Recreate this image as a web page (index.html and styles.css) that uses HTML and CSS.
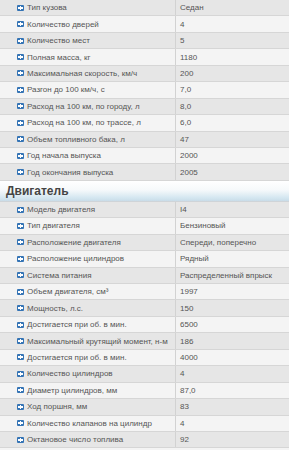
FILE: index.html
```html
<!DOCTYPE html>
<html lang="ru">
<head>
<meta charset="utf-8">
<title>Характеристики</title>
<link rel="stylesheet" href="styles.css">
</head>
<body>
<div class="specs">
  <div class="group">
    <div class="row"><div class="name"><span class="ico"></span>Тип кузова</div><div class="val">Седан</div></div>
    <div class="row"><div class="name"><span class="ico"></span>Количество дверей</div><div class="val">4</div></div>
    <div class="row"><div class="name"><span class="ico"></span>Количество мест</div><div class="val">5</div></div>
    <div class="row"><div class="name"><span class="ico"></span>Полная масса, кг</div><div class="val">1180</div></div>
    <div class="row"><div class="name"><span class="ico"></span>Максимальная скорость, км/ч</div><div class="val">200</div></div>
    <div class="row"><div class="name"><span class="ico"></span>Разгон до 100 км/ч, с</div><div class="val">7,0</div></div>
    <div class="row"><div class="name"><span class="ico"></span>Расход на 100 км, по городу, л</div><div class="val">8,0</div></div>
    <div class="row"><div class="name"><span class="ico"></span>Расход на 100 км, по трассе, л</div><div class="val">6,0</div></div>
    <div class="row"><div class="name"><span class="ico"></span>Объем топливного бака, л</div><div class="val">47</div></div>
    <div class="row"><div class="name"><span class="ico"></span>Год начала выпуска</div><div class="val">2000</div></div>
    <div class="row"><div class="name"><span class="ico"></span>Год окончания выпуска</div><div class="val">2005</div></div>
  </div>
  <div class="section-title">Двигатель</div>
  <div class="group">
    <div class="row"><div class="name"><span class="ico"></span>Модель двигателя</div><div class="val">I4</div></div>
    <div class="row"><div class="name"><span class="ico"></span>Тип двигателя</div><div class="val">Бензиновый</div></div>
    <div class="row"><div class="name"><span class="ico"></span>Расположение двигателя</div><div class="val">Спереди, поперечно</div></div>
    <div class="row"><div class="name"><span class="ico"></span>Расположение цилиндров</div><div class="val">Рядный</div></div>
    <div class="row"><div class="name"><span class="ico"></span>Система питания</div><div class="val">Распределенный впрыск</div></div>
    <div class="row"><div class="name"><span class="ico"></span>Объем двигателя, см³</div><div class="val">1997</div></div>
    <div class="row"><div class="name"><span class="ico"></span>Мощность, л.с.</div><div class="val">150</div></div>
    <div class="row"><div class="name"><span class="ico"></span>Достигается при об. в мин.</div><div class="val">6500</div></div>
    <div class="row"><div class="name"><span class="ico"></span>Максимальный крутящий момент, н-м</div><div class="val">186</div></div>
    <div class="row"><div class="name"><span class="ico"></span>Достигается при об. в мин.</div><div class="val">4000</div></div>
    <div class="row"><div class="name"><span class="ico"></span>Количество цилиндров</div><div class="val">4</div></div>
    <div class="row"><div class="name"><span class="ico"></span>Диаметр цилиндров, мм</div><div class="val">87,0</div></div>
    <div class="row"><div class="name"><span class="ico"></span>Ход поршня, мм</div><div class="val">83</div></div>
    <div class="row"><div class="name"><span class="ico"></span>Количество клапанов на цилиндр</div><div class="val">4</div></div>
    <div class="row"><div class="name"><span class="ico"></span>Октановое число топлива</div><div class="val">92</div></div>
  </div>
</div>
</body>
</html>
```
FILE: styles.css
```css
html, body {
  margin: 0;
  padding: 0;
  background: #f4f4f4;
}
.specs {
  width: 289px;
  font-family: "Liberation Sans", Arial, sans-serif;
  font-size: 8px;
  color: #555;
}
.row {
  display: grid;
  grid-template-columns: 176px 1fr;
  height: 16.45px;
  box-sizing: border-box;
  border-bottom: 1px solid #d6d6d6;
  background: #e6e6e6;
}
.group .row:nth-child(even) {
  background: #f4f4f4;
}
.name {
  display: flex;
  align-items: center;
  padding-left: 17px;
  border-right: 1px solid #d2d2d2;
  white-space: nowrap;
  overflow: hidden;
}
.val {
  display: flex;
  align-items: center;
  padding-left: 4px;
  white-space: nowrap;
}
.ico {
  position: relative;
  flex: none;
  width: 7px;
  height: 6px;
  margin-right: 3px;
  background: #3574b5;
  border-radius: 1px;
}
.ico::before {
  content: "";
  position: absolute;
  left: 1px;
  top: 2px;
  width: 5px;
  height: 2px;
  background: #fff;
}
.ico::after {
  content: "";
  position: absolute;
  left: 3px;
  top: 1px;
  width: 1px;
  height: 4px;
  background: #fff;
}
.section-title {
  height: 21px;
  box-sizing: border-box;
  display: flex;
  align-items: center;
  padding-left: 6px;
  font-size: 12px;
  font-weight: bold;
  color: #444;
  background: linear-gradient(to bottom, #ffffff 0%, #f6f9fb 45%, #d3e6f0 85%, #c9dce8 100%);
  border-bottom: 1px solid #cfd4d8;
}
```
